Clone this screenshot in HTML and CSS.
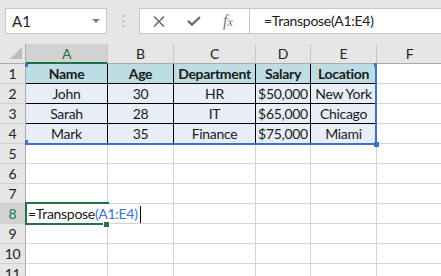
FILE: index.html
```html
<!DOCTYPE html>
<html>
<head>
<meta charset="utf-8">
<link rel="stylesheet" href="styles.css">
</head>
<body>
<div class="toolbar">
  <div class="namebox">
    <span class="nb-text">A1</span>
    <svg class="nb-caret" width="8" height="4" viewBox="0 0 8 4"><path d="M0 0h8L4 4z" fill="#7a7a7a"/></svg>
  </div>
  <div class="grip">
    <svg width="3" height="12" viewBox="0 0 3 12"><rect x="0.5" y="0" width="2" height="2" fill="#b4b4b4"/><rect x="0.5" y="5" width="2" height="2" fill="#b4b4b4"/><rect x="0.5" y="10" width="2" height="2" fill="#b4b4b4"/></svg>
  </div>
  <div class="fxbox">
    <svg class="ic-x" width="12" height="11" viewBox="0 0 12 11"><path d="M1 0.5L11 10.5M11 0.5L1 10.5" stroke="#6e6e6e" stroke-width="1.6" fill="none"/></svg>
    <svg class="ic-check" width="14" height="10" viewBox="0 0 14 10"><path d="M1 4.8L5 8.6L13 1" stroke="#6e6e6e" stroke-width="2.4" fill="none"/></svg>
    <span class="ic-fx">f<span class="x">x</span></span>
  </div>
  <div class="formula">=Transpose(A1:E4)</div>
</div>
<div class="sheet">
  <div class="grid">
    <div class="ch corner"><svg width="12" height="12" viewBox="0 0 12 12"><path d="M12 0V12H0z" fill="#bdbdbd"/></svg></div>
    <div class="ch selcol">A</div>
    <div class="ch">B</div>
    <div class="ch">C</div>
    <div class="ch">D</div>
    <div class="ch">E</div>
    <div class="ch">F</div>

    <div class="rh">1</div>
    <div class="c th">Name</div><div class="c th">Age</div><div class="c th">Department</div><div class="c th">Salary</div><div class="c th">Location</div><div class="c"></div>

    <div class="rh">2</div>
    <div class="c td">John</div><div class="c td">30</div><div class="c td">HR</div><div class="c td">$50,000</div><div class="c td">New York</div><div class="c"></div>

    <div class="rh">3</div>
    <div class="c td">Sarah</div><div class="c td">28</div><div class="c td">IT</div><div class="c td">$65,000</div><div class="c td">Chicago</div><div class="c"></div>

    <div class="rh">4</div>
    <div class="c td">Mark</div><div class="c td">35</div><div class="c td">Finance</div><div class="c td">$75,000</div><div class="c td">Miami</div><div class="c"></div>

    <div class="rh">5</div><div class="c"></div><div class="c"></div><div class="c"></div><div class="c"></div><div class="c"></div><div class="c"></div>
    <div class="rh">6</div><div class="c"></div><div class="c"></div><div class="c"></div><div class="c"></div><div class="c"></div><div class="c"></div>
    <div class="rh">7</div><div class="c"></div><div class="c"></div><div class="c"></div><div class="c"></div><div class="c"></div><div class="c"></div>
    <div class="rh selrow">8</div><div class="c edit"><span class="etext">=Transpose<span class="ref">(A1:E4)</span><span class="cursor"></span></span></div><div class="c nob"></div><div class="c"></div><div class="c"></div><div class="c"></div><div class="c"></div>
    <div class="rh">9</div><div class="c"></div><div class="c"></div><div class="c"></div><div class="c"></div><div class="c"></div><div class="c"></div>
    <div class="rh">10</div><div class="c"></div><div class="c"></div><div class="c"></div><div class="c"></div><div class="c"></div><div class="c"></div>
    <div class="rh">11</div><div class="c"></div><div class="c"></div><div class="c"></div><div class="c"></div><div class="c"></div><div class="c"></div>
  </div>
  <div class="range">
    <span class="h tl"></span><span class="h tr"></span><span class="h bl"></span><span class="h br"></span>
  </div>
  <div class="active"><span class="fill"></span></div>
</div>
</body>
</html>
```

FILE: styles.css
```css
html, body {
  margin: 0;
  padding: 0;
  background: #e6e6e6;
  overflow: hidden;
}
body {
  width: 441px;
  height: 276px;
  font-family: Lato, "Liberation Sans", sans-serif;
  font-size: 14px;
  letter-spacing: -0.3px;
  color: #1a1a1a;
}
.toolbar {
  height: 44px;
  display: flex;
  align-items: flex-start;
  padding-top: 8px;
  padding-left: 5px;
  box-sizing: border-box;
}
.namebox {
  width: 102px;
  height: 26px;
  box-sizing: border-box;
  background: #fff;
  border: 1px solid #c6c6c6;
  display: flex;
  align-items: center;
  justify-content: space-between;
  padding: 0 6px 0 6px;
  font-size: 15px;
  letter-spacing: 0;
}
.nb-text { color: #222; }
.grip {
  width: 32px;
  height: 26px;
  display: flex;
  align-items: center;
  justify-content: center;
}
.fxbox {
  width: 110px;
  height: 26px;
  box-sizing: border-box;
  background: #fff;
  border: 1px solid #c6c6c6;
  border-right: none;
  display: flex;
  align-items: center;
  position: relative;
}
.ic-x { margin-left: 13px; }
.ic-check { margin-left: 22px; }
.ic-fx {
  margin-left: 22px;
  font-family: "Liberation Serif", serif;
  font-style: italic;
  font-size: 16px;
  letter-spacing: 0;
  color: #7a7a7a;
}
.ic-fx .x { font-size: 12px; }
.formula {
  flex: 1;
  height: 26px;
  box-sizing: border-box;
  background: #fff;
  border: 1px solid #c6c6c6;
  border-right: none;
  padding-left: 14px;
  line-height: 24px;
  color: #1a1a1a;
}
.sheet {
  position: relative;
}
.grid {
  display: grid;
  grid-template-columns: 26px 82px 66px 82px 55px 66px 66px;
  grid-auto-rows: 20px;
}
.ch {
  background: #e6e6e6;
  box-sizing: border-box;
  border-right: 1px solid #c8c8c8;
  border-bottom: 1px solid #ababab;
  text-align: center;
  line-height: 20px;
  color: #222;
}
.corner {
  display: flex;
  align-items: flex-end;
  justify-content: flex-end;
  padding: 0 3px 4px 0;
  border-right: 1px solid #ababab;
}
.selcol {
  background: #d2d2d2;
  color: #217346;
  border-bottom: 2px solid #217346;
  line-height: 19px;
}
.rh {
  background: #e6e6e6;
  box-sizing: border-box;
  border-right: 1px solid #ababab;
  border-bottom: 1px solid #d0d0d0;
  text-align: center;
  line-height: 20px;
  color: #222;
}
.selrow {
  background: #d2d2d2;
  color: #217346;
}
.c {
  background: #fff;
  box-sizing: border-box;
  border-right: 1px solid #d4d4d4;
  border-bottom: 1px solid #d4d4d4;
  text-align: center;
  line-height: 20px;
  white-space: nowrap;
}
.th {
  background: #bddce4;
  font-weight: bold;
  border-right-color: #000;
  border-bottom-color: #000;
}
.td {
  background: #e8eef8;
  border-right-color: #000;
  border-bottom-color: #000;
}
.edit {
  text-align: left;
  overflow: visible;
  position: relative;
  z-index: 2;
  padding-left: 2px;
  border-right: none;
}
.nob { border-left: none; }
.etext { color: #1a1a1a; position: relative; }
.ref { color: #3f74d0; }
.cursor {
  display: inline-block;
  width: 1px;
  height: 17px;
  background: #000;
  vertical-align: -4px;
  margin-left: 2px;
}
.range {
  position: absolute;
  left: 25px;
  top: 20px;
  width: 352px;
  height: 81px;
  box-sizing: border-box;
  border-right: 2px solid #3c6fc6;
  border-bottom: 2px solid #3c6fc6;
  pointer-events: none;
}
.h {
  position: absolute;
  background: #3c6fc6;
}
.tl { left: 0; top: 0; width: 3px; height: 3px; }
.tr { right: -2px; top: -1px; width: 3px; height: 4px; }
.bl { left: 0; bottom: -2px; width: 3px; height: 5px; }
.br { right: -4px; bottom: -4px; width: 5px; height: 5px; }
.active {
  position: absolute;
  left: 25px;
  top: 158px;
  width: 84px;
  height: 23px;
  box-sizing: border-box;
  border: 2px solid #217346;
  border-right: none;
  z-index: 3;
}
.fill {
  position: absolute;
  right: 0;
  bottom: -4px;
  width: 5px;
  height: 5px;
  background: #217346;
  outline: 1px solid #fff;
}
```
